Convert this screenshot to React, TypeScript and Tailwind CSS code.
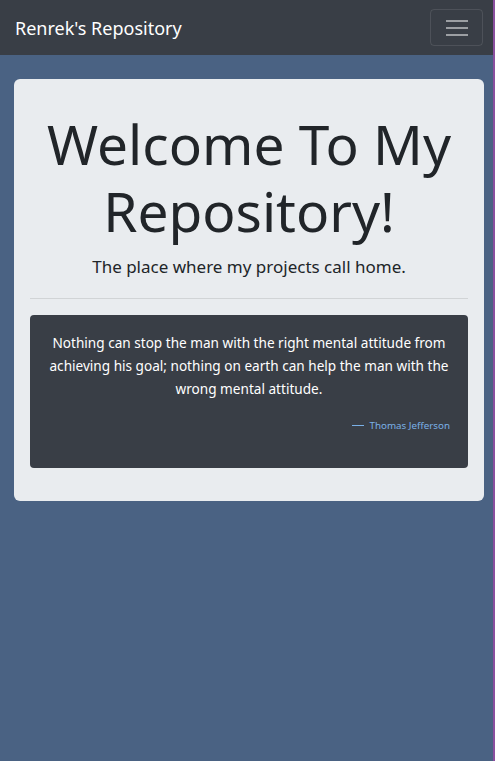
export default function App() {
  const font = { fontFamily: '"Noto Sans", "Open Sans", sans-serif' };
  return (
    <div className="min-h-[761px] bg-[#4a6283] border-r-2 border-r-[#8a4f9e]" style={font}>
      <nav className="h-[55px] bg-[#393e46] flex items-center justify-between pl-[15px] pr-[10px]">
        <a className="text-white text-[18px] leading-none">Renrek's Repository</a>
        <button className="w-[53px] h-[37px] rounded-[4px] border border-white/10 flex flex-col items-center justify-center gap-[5px]">
          <span className="block w-[22px] h-[2px] bg-white/50"></span>
          <span className="block w-[22px] h-[2px] bg-white/50"></span>
          <span className="block w-[22px] h-[2px] bg-white/50"></span>
        </button>
      </nav>
      <main className="pt-6 pl-[14px] pr-[9px]">
        <section className="bg-[#e9ecef] rounded-[6px] px-4 pt-[31px] pb-[33px] text-[#212529]">
          <h1 className="text-center text-[55px] leading-[67px] font-normal">Welcome To My Repository!</h1>
          <p className="text-center text-[17px] leading-[30px] mt-2">The place where my projects call home.</p>
          <hr className="my-4 border-black/10" />
          <div className="bg-[#393e46] rounded-[4px] p-4 h-[153px]">
            <blockquote className="text-center text-white text-[13.6px] leading-[23px]">
              <p>Nothing can stop the man with the right mental attitude from achieving his goal; nothing on earth can help the man with the wrong mental attitude.</p>
              <footer className="mt-[14px] flex items-center justify-end gap-[5px] pr-[2px] text-[9.8px] text-[#7ab0e6]">
                <span className="block w-[12px] h-[1.5px] bg-[#7ab0e6]"></span>
                <span>Thomas Jefferson</span>
              </footer>
            </blockquote>
          </div>
        </section>
      </main>
    </div>
  );
}
